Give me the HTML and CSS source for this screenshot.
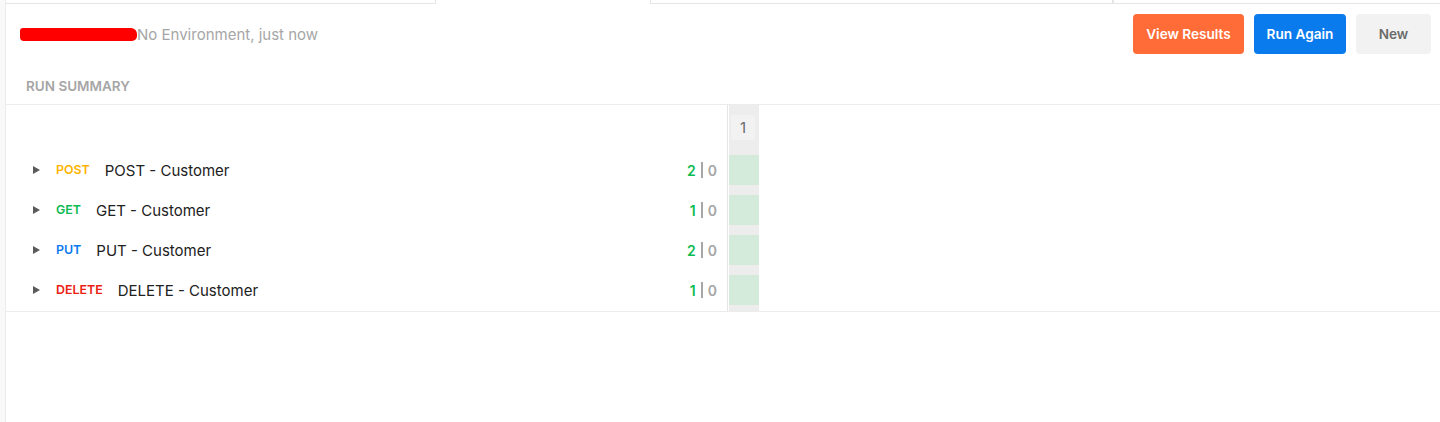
FILE: index.html
```html
<!DOCTYPE html>
<html lang="en">
<head>
<meta charset="utf-8">
<title>Run Summary</title>
<link rel="stylesheet" href="styles.css">
</head>
<body>
<div class="app">
  <div class="gutter"></div>
  <div class="main">
    <div class="tabs">
      <div class="tab tab-a"></div>
      <div class="tab tab-active"></div>
      <div class="tab tab-c"></div>
      <div class="tab tab-d"></div>
    </div>
    <div class="header">
      <div class="meta">
        <span class="redact"></span><span class="env">No Environment, just now</span>
      </div>
      <div class="actions">
        <button class="btn btn-orange">View Results</button>
        <button class="btn btn-blue">Run Again</button>
        <button class="btn btn-grey">New</button>
      </div>
    </div>
    <div class="section-label">RUN SUMMARY</div>
    <div class="summary">
      <div class="requests">
        <div class="req-head"></div>
        <div class="req">
          <span class="caret"></span>
          <span class="method post">POST</span>
          <span class="name">POST - Customer</span>
          <span class="counts"><span class="pass">2</span><span class="sep"></span><span class="fail">0</span></span>
        </div>
        <div class="req">
          <span class="caret"></span>
          <span class="method get">GET</span>
          <span class="name">GET - Customer</span>
          <span class="counts"><span class="pass">1</span><span class="sep"></span><span class="fail">0</span></span>
        </div>
        <div class="req">
          <span class="caret"></span>
          <span class="method put">PUT</span>
          <span class="name">PUT - Customer</span>
          <span class="counts"><span class="pass">2</span><span class="sep"></span><span class="fail">0</span></span>
        </div>
        <div class="req">
          <span class="caret"></span>
          <span class="method delete">DELETE</span>
          <span class="name">DELETE - Customer</span>
          <span class="counts"><span class="pass">1</span><span class="sep"></span><span class="fail">0</span></span>
        </div>
      </div>
      <div class="iteration">
        <div class="iter-head"><span class="iter-num">1</span></div>
        <div class="iter-cell"><span class="cell-ok"></span></div>
        <div class="iter-cell"><span class="cell-ok"></span></div>
        <div class="iter-cell"><span class="cell-ok"></span></div>
        <div class="iter-cell"><span class="cell-ok"></span></div>
      </div>
    </div>
  </div>
</div>
</body>
</html>
```

FILE: styles.css
```css
* { box-sizing: border-box; }
html, body { margin: 0; padding: 0; background: #fff; }
body {
  font-family: Inter, "Noto Sans", "Liberation Sans", sans-serif;
  color: #212121;
  height: 422px;
  overflow: hidden;
}
.app { display: flex; height: 422px; }
.gutter {
  width: 6px;
  flex: none;
  background: #f9f9f9;
  border-right: 1px solid #ececec;
}
.main { flex: 1; display: flex; flex-direction: column; min-width: 0; }

.tabs { display: flex; height: 4px; }
.tab { height: 4px; border-bottom: 1px solid #e6e6e6; }
.tab-a { width: 430px; border-right: 1px solid #e6e6e6; }
.tab-active { width: 214px; border-bottom-color: transparent; }
.tab-c { width: 463px; border-left: 1px solid #e6e6e6; border-right: 1px solid #e6e6e6; }
.tab-d { flex: 1; border-left: 1px solid #e6e6e6; }

.header {
  display: flex;
  align-items: center;
  justify-content: space-between;
  padding: 10px 9px 0 14px;
}
.meta { display: flex; align-items: center; }
.redact {
  display: inline-block;
  width: 117px;
  height: 13px;
  background: #ff0000;
  border-radius: 3px 6px 5px 4px;
}
.env { font-size: 15px; color: #a6a6a6; }
.actions { display: flex; gap: 10px; }
.btn {
  height: 40px;
  border: none;
  border-radius: 4px;
  font-family: inherit;
  font-size: 13.6px;
  font-weight: 600;
  padding: 0;
  cursor: pointer;
}
.btn-orange { width: 111px; background: #ff6c37; color: #fff; }
.btn-blue { width: 92px; background: #097bed; color: #fff; }
.btn-grey { width: 75px; background: #f2f2f2; color: #6b6b6b; }

.section-label {
  margin-top: 24px;
  padding: 0 0 10px 20px;
  font-size: 13.5px;
  line-height: 16px;
  font-weight: 600;
  color: #a6a6a6;
  border-bottom: 1px solid #ececec;
}

.summary {
  display: flex;
  border-bottom: 1px solid #ececec;
}
.requests {
  width: 722px;
  padding-bottom: 1px;
  border-right: 1px solid #e6e6e6;
}
.req-head { height: 45px; }
.req {
  height: 40px;
  display: flex;
  align-items: center;
  padding: 0 10px 0 27px;
}
.caret {
  width: 0; height: 0;
  border-top: 4.5px solid transparent;
  border-bottom: 4.5px solid transparent;
  border-left: 7px solid #5a5a5a;
  margin-right: 16px;
}
.method {
  font-size: 12.4px;
  font-weight: 600;
  margin-right: 15px;
  position: relative;
  top: -1px;
}
.post { color: #ffb400; }
.get { color: #0cbb52; }
.put { color: #097bed; }
.delete { color: #eb2013; }
.name { font-size: 15px; color: #212121; flex: 1; }
.counts { display: flex; align-items: center; font-size: 14px; }
.pass { color: #0cbb52; font-weight: 600; }
.sep { width: 2px; height: 16px; background: #a6a6a6; margin: 0 5px; }
.fail { color: #a6a6a6; font-weight: 600; }

.iteration {
  width: 30px;
  margin-left: 1px;
  background: #ededed;
}
.iter-head { height: 45px; padding: 10px 2px 0 2px; }
.iter-num {
  display: flex;
  align-items: center;
  justify-content: center;
  width: 24px;
  height: 25px;
  border-radius: 3px;
  background: #f2f2f2;
  font-size: 15px;
  color: #6b6b6b;
}
.iter-cell { height: 40px; padding: 5px 0; }
.cell-ok { display: block; height: 30px; background: #d4ebdb; }
```
